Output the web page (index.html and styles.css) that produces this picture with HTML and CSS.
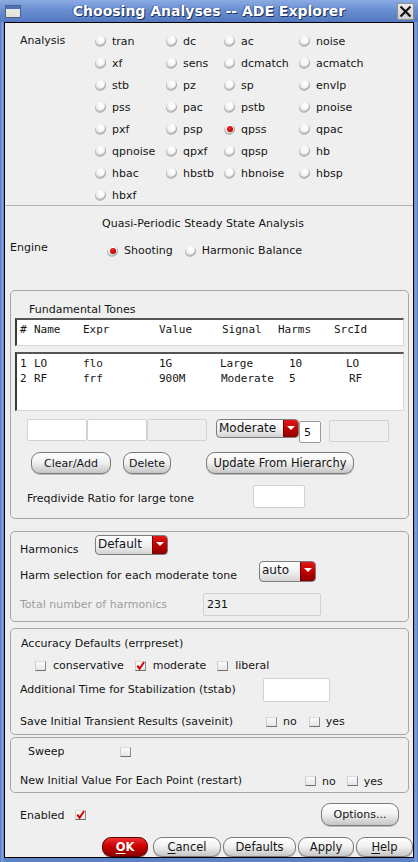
FILE: index.html
```html
<!DOCTYPE html>
<html>
<head>
<meta charset="utf-8">
<title>Choosing Analyses -- ADE Explorer</title>
<link rel="stylesheet" href="styles.css">
</head>
<body>
<div class="window">
  <div class="titlebar">
    <span class="win-icon"></span>
    <span class="title">Choosing Analyses -- ADE Explorer</span>
    <span class="close-btn"><svg width="13" height="13" viewBox="0 0 13 13"><path d="M1.5 1.5 L11.5 11.5 M11.5 1.5 L1.5 11.5" stroke="#111" stroke-width="2.2" fill="none"/></svg></span>
  </div>
  <div class="client">
    <section class="analysis">
      <div class="analysis-label">Analysis</div>
      <div class="radio-grid">
        <span class="radio"><span class="rb"></span>tran</span>
        <span class="radio"><span class="rb"></span>dc</span>
        <span class="radio"><span class="rb"></span>ac</span>
        <span class="radio"><span class="rb"></span>noise</span>
        <span class="radio"><span class="rb"></span>xf</span>
        <span class="radio"><span class="rb"></span>sens</span>
        <span class="radio"><span class="rb"></span>dcmatch</span>
        <span class="radio"><span class="rb"></span>acmatch</span>
        <span class="radio"><span class="rb"></span>stb</span>
        <span class="radio"><span class="rb"></span>pz</span>
        <span class="radio"><span class="rb"></span>sp</span>
        <span class="radio"><span class="rb"></span>envlp</span>
        <span class="radio"><span class="rb"></span>pss</span>
        <span class="radio"><span class="rb"></span>pac</span>
        <span class="radio"><span class="rb"></span>pstb</span>
        <span class="radio"><span class="rb"></span>pnoise</span>
        <span class="radio"><span class="rb"></span>pxf</span>
        <span class="radio"><span class="rb"></span>psp</span>
        <span class="radio"><span class="rb on"></span>qpss</span>
        <span class="radio"><span class="rb"></span>qpac</span>
        <span class="radio"><span class="rb"></span>qpnoise</span>
        <span class="radio"><span class="rb"></span>qpxf</span>
        <span class="radio"><span class="rb"></span>qpsp</span>
        <span class="radio"><span class="rb"></span>hb</span>
        <span class="radio"><span class="rb"></span>hbac</span>
        <span class="radio"><span class="rb"></span>hbstb</span>
        <span class="radio"><span class="rb"></span>hbnoise</span>
        <span class="radio"><span class="rb"></span>hbsp</span>
        <span class="radio"><span class="rb"></span>hbxf</span>
      </div>
    </section>

    <div class="qpss-title">Quasi-Periodic Steady State Analysis</div>

    <div class="engine">
      <span class="engine-label">Engine</span>
      <span class="engine-opts">
        <span class="radio shoot"><span class="rb on"></span>Shooting</span>
        <span class="radio"><span class="rb"></span>Harmonic Balance</span>
      </span>
    </div>

    <div class="group tones">
      <div class="group-title">Fundamental Tones</div>
      <div class="listbox header-box">
        <div class="trow">
          <span>#</span><span>Name</span><span>Expr</span><span>Value</span><span>Signal</span><span>Harms</span><span>SrcId</span>
        </div>
      </div>
      <div class="listbox data-box">
        <div class="trow data">
          <span>1</span><span>LO</span><span>flo</span><span>1G</span><span>Large</span><span>10</span><span>LO</span>
        </div>
        <div class="trow data">
          <span>2</span><span>RF</span><span>frf</span><span>900M</span><span class="mod">Moderate</span><span>5</span><span class="rf">RF</span>
        </div>
      </div>
      <div class="edit-row">
        <span class="field f60"></span>
        <span class="field f60"></span>
        <span class="field f60 disabled"></span>
        <span class="combo c-mod"><span class="combo-text">Moderate</span><span class="combo-btn"></span></span>
        <span class="field f5">5</span>
        <span class="field f60 disabled f-last"></span>
      </div>
      <div class="btn-row">
        <span class="btn b-clear">Clear/Add</span>
        <span class="btn b-delete">Delete</span>
        <span class="btn b-update">Update From Hierarchy</span>
      </div>
      <div class="freq-row">
        <span class="freq-label">Freqdivide Ratio for large tone</span>
        <span class="field f-freq"></span>
      </div>
    </div>

    <div class="group harm">
      <div class="harm-row r1">
        <span class="lbl l-harm">Harmonics</span>
        <span class="combo c-default"><span class="combo-text">Default</span><span class="combo-btn"></span></span>
      </div>
      <div class="harm-row r2">
        <span class="lbl l-sel">Harm selection for each moderate tone</span>
        <span class="combo c-auto"><span class="combo-text">auto</span><span class="combo-btn"></span></span>
      </div>
      <div class="harm-row r3">
        <span class="lbl l-total">Total number of harmonics</span>
        <span class="field f-total disabled">231</span>
      </div>
    </div>

    <div class="group accuracy">
      <div class="acc-title">Accuracy Defaults (errpreset)</div>
      <div class="check-row">
        <span class="check"><span class="cb"></span>conservative</span>
        <span class="check"><span class="cb on"><svg width="10" height="10" viewBox="0 0 10 10"><path d="M1.5 4.5 L4 8 L9 0.5" stroke="#d40000" stroke-width="2.2" fill="none"/></svg></span>moderate</span>
        <span class="check"><span class="cb"></span>liberal</span>
      </div>
      <div class="tstab-row">
        <span class="lbl l-tstab">Additional Time for Stabilization (tstab)</span>
        <span class="field f-tstab"></span>
      </div>
      <div class="save-row">
        <span class="lbl l-save">Save Initial Transient Results (saveinit)</span>
        <span class="check"><span class="cb"></span>no</span>
        <span class="check"><span class="cb"></span>yes</span>
      </div>
    </div>

    <div class="group sweep">
      <div class="sweep-row">
        <span class="lbl l-sweep">Sweep</span>
        <span class="cb"></span>
      </div>
      <div class="restart-row">
        <span class="lbl l-restart">New Initial Value For Each Point (restart)</span>
        <span class="check"><span class="cb"></span>no</span>
        <span class="check"><span class="cb"></span>yes</span>
      </div>
    </div>

    <div class="enabled-row">
      <span class="lbl l-enabled">Enabled</span>
      <span class="cb on"><svg width="10" height="10" viewBox="0 0 10 10"><path d="M1.5 4.5 L4 8 L9 0.5" stroke="#d40000" stroke-width="2.2" fill="none"/></svg></span>
      <span class="btn b-options">Options...</span>
    </div>

    <div class="dialog-buttons">
      <span class="btn b-ok"><u>O</u>K</span>
      <span class="btn b-cancel"><u>C</u>ancel</span>
      <span class="btn b-defaults">Defaults</span>
      <span class="btn b-apply">Apply</span>
      <span class="btn b-help"><u>H</u>elp</span>
    </div>
  </div>
</div>
</body>
</html>
```

FILE: styles.css
```css
* { box-sizing: border-box; }
html, body { margin: 0; padding: 0; }
body {
  width: 418px;
  height: 862px;
  overflow: hidden;
  font-family: "DejaVu Sans", "Liberation Sans", sans-serif;
  font-size: 11px;
  color: #151515;
  background: #5b80c6;
}

.window {
  width: 418px;
  height: 862px;
  display: flex;
  flex-direction: column;
  padding: 0 4px 4px;
  background: linear-gradient(90deg, #4c72ba 0, #86a6de 2px, #5d82c7 4px, #5d82c7 414px, #86a6de 416px, #4c72ba 418px);
}

/* title bar */
.titlebar {
  height: 22px;
  margin: 0 -4px;
  display: flex;
  align-items: center;
  background: linear-gradient(#8babe2, #6a8ed0 45%, #5479c2);
}
.win-icon {
  margin-left: 5px;
  width: 16px;
  height: 13px;
  border: 1px solid #50618a;
  background: linear-gradient(#4f70b8 0, #4f70b8 3px, #e9ece2 3px, #dfe2d6);
}
.title {
  flex: 1;
  text-align: center;
  color: #fff;
  font-weight: bold;
  font-size: 14px;
  text-shadow: 1px 1px 0 #23325a, -1px 0 1px #3a5591;
}
.close-btn {
  margin-right: 4px;
  width: 17px;
  height: 17px;
  background: linear-gradient(#ececec, #cfcfcf);
  border: 1px solid #8f8f8f;
  display: flex;
  align-items: center;
  justify-content: center;
}

/* client area */
.client {
  flex: 1;
  background: #efefef;
  border: 1px solid #000;
  display: flex;
  flex-direction: column;
  overflow: hidden;
}

/* analysis radio grid */
.analysis {
  display: flex;
  height: 183px;
  padding: 7px 0 0 15px;
  border-bottom: 1px solid #b3b3b3;
}
.analysis-label {
  width: 76px;
  line-height: 22px;
}
.radio-grid {
  display: grid;
  grid-template-columns: 71px 58px 75px auto;
  grid-auto-rows: 22px;
}
.radio {
  display: flex;
  align-items: center;
  gap: 6px;
  white-space: nowrap;
}
.rb {
  position: relative;
  flex: none;
  width: 10px;
  height: 10px;
  border-radius: 50%;
  background: radial-gradient(circle at 55% 35%, #ffffff 0, #f7f7f7 45%, #dadada 85%, #c4c4c4 100%);
  box-shadow: -1px 1px 0 #bcbcbc, inset -1px -1px 1px #a6a6a6;
}
.rb.on::after {
  content: "";
  position: absolute;
  left: 2px;
  top: 2px;
  width: 6px;
  height: 6px;
  border-radius: 50%;
  background: radial-gradient(circle at 40% 35%, #ff2a2a, #c80000 60%, #8a0000);
}

.qpss-title {
  margin-top: 10px;
  line-height: 16px;
  text-align: center;
  padding-right: 12px;
}

.engine {
  display: flex;
  margin-top: 8px;
  height: 19px;
  padding-left: 5px;
}
.engine-label {
  width: 98px;
  line-height: 16px;
  align-self: flex-start;
}
.engine-opts {
  display: flex;
  align-self: flex-end;
  line-height: 16px;
}
.engine-opts .shoot { margin-right: 13px; }

/* group boxes */
.group {
  margin-left: 5px;
  margin-right: 4px;
  border: 1px solid #a6a6a6;
  border-radius: 5px;
}
.tones {
  margin-top: 31px;
  padding-top: 11px;
  padding-bottom: 10px;
}
.group-title {
  line-height: 16px;
  padding-left: 18px;
}
.listbox {
  margin: 0 4px;
  background: #fff;
  border-style: solid;
  border-width: 2px 1px 1px 2px;
  border-color: #555 #d6d6d6 #d6d6d6 #3a3a3a;
  padding: 2px 3px;
  font-family: "DejaVu Sans Mono", "Liberation Mono", monospace;
  font-size: 11px;
}
.header-box { height: 28px; }
.data-box { height: 59px; margin-top: 6px; }
.trow {
  display: grid;
  grid-template-columns: 14px 49px 76px 63px 56px 56px auto;
  line-height: 15px;
  white-space: pre;
}
.trow.data {
  grid-template-columns: 14px 49px 76px 61px 69px 57px auto;
}
.trow .mod { margin-left: 1px; }
.trow .rf { margin-left: 3px; }

.edit-row {
  display: flex;
  align-items: flex-start;
  margin-top: 8px;
  padding-left: 16px;
  height: 24px;
}
.field {
  display: block;
  height: 22px;
  background: #fff;
  border: 1px solid #d2d2d2;
  border-radius: 2px;
}
.field.disabled { background: #efefef; }
.f60 { width: 60px; }
.f5 {
  width: 22px;
  margin-top: 2px;
  border-color: #9c9c9c;
  padding: 4px 0 0 4px;
  line-height: 14px;
}
.f-last { margin-left: 8px; margin-top: 1px; }

.combo {
  display: flex;
  height: 19px;
  border: 1px solid #7d7d7d;
  border-radius: 4px;
  background: linear-gradient(#ffffff, #f1f1f1 50%, #d4d4d4);
  overflow: hidden;
}
.combo-text {
  flex: 1;
  padding-left: 2px;
  line-height: 16px;
  font-size: 12px;
}
.combo-btn {
  position: relative;
  width: 15px;
  background: linear-gradient(#e21818, #bb0000 55%, #8c0000);
  border-left: 1px solid #7a0000;
}
.combo-btn::after {
  content: "";
  position: absolute;
  left: 3px;
  top: 6px;
  border-left: 4px solid transparent;
  border-right: 4px solid transparent;
  border-top: 4px solid #fff;
}
.c-mod { width: 83px; margin-left: 9px; }
.c-default { width: 73px; height: 20px; }
.c-auto { width: 57px; height: 21px; }

/* buttons */
.btn {
  display: flex;
  align-items: center;
  justify-content: center;
  height: 22px;
  border: 1px solid #7a7a7a;
  border-radius: 9px;
  background: linear-gradient(#ffffff, #f2f2f2 45%, #dadada 75%, #c6c6c6);
  box-shadow: 0 1px 0 #bdbdbd;
  white-space: nowrap;
}
.btn u { text-decoration: underline; text-underline-offset: 2px; }
.btn-row {
  display: flex;
  margin-top: 9px;
  padding-left: 20px;
}
.b-clear { width: 80px; }
.b-delete { width: 48px; margin-left: 12px; }
.b-update { width: 148px; margin-left: 35px; font-size: 11.5px; }

.freq-row {
  display: flex;
  align-items: flex-start;
  margin-top: 11px;
  padding-left: 16px;
}
.freq-label {
  width: 226px;
  padding-top: 6px;
  line-height: 16px;
}
.f-freq { width: 52px; height: 23px; }

/* harmonics */
.harm {
  margin-top: 12px;
  padding: 3px 0 5px 9px;
}
.harm-row {
  display: flex;
  align-items: flex-start;
}
.lbl { line-height: 16px; white-space: nowrap; }
.l-harm { width: 75px; margin-top: 7px; }
.harm-row.r2 { margin-top: 3px; }
.l-sel { width: 239px; margin-top: 7px; }
.harm-row.r3 { margin-top: 9px; }
.l-total { width: 183px; margin-top: 4px; color: #9e9e9e; }
.f-total {
  width: 118px;
  height: 23px;
  padding: 4px 0 0 3px;
  line-height: 14px;
  color: #111;
}

/* accuracy */
.accuracy {
  margin-top: 6px;
  padding: 7px 0 4px 9px;
}
.acc-title { line-height: 16px; padding-left: 1px; }
.check-row {
  display: flex;
  margin-top: 6px;
  padding-left: 15px;
  line-height: 16px;
}
.check {
  display: flex;
  align-items: center;
  gap: 7px;
  white-space: nowrap;
}
.check-row .check + .check { margin-left: 11px; }
.cb {
  display: flex;
  align-items: center;
  justify-content: center;
  flex: none;
  width: 11px;
  height: 10px;
  background: linear-gradient(#fbfbfb, #e6e6e6);
  border: 1px solid;
  border-color: #dcdcdc #8c8c8c #6e6e6e #d0d0d0;
}
.tstab-row {
  display: flex;
  align-items: center;
  margin-top: 4px;
}
.l-tstab { width: 243px; }
.f-tstab { width: 67px; height: 24px; }
.save-row {
  display: flex;
  align-items: center;
  margin-top: 12px;
  line-height: 16px;
}
.l-save { width: 246px; }
.save-row .check, .restart-row .check { gap: 6px; }
.save-row .check + .check { margin-left: 12px; }

/* sweep */
.sweep {
  margin-top: 2px;
  padding: 6px 0 3px 9px;
}
.sweep-row {
  display: flex;
  align-items: center;
}
.l-sweep { width: 100px; padding-left: 8px; }
.restart-row {
  display: flex;
  align-items: center;
  margin-top: 13px;
}
.l-restart { width: 285px; }
.restart-row .check + .check { margin-left: 11px; }

/* bottom rows */
.enabled-row {
  display: flex;
  align-items: center;
  margin-top: 10px;
  padding-left: 15px;
}
.l-enabled { width: 55px; padding-top: 2px; }
.b-options {
  margin-left: auto;
  margin-right: 14px;
  width: 78px;
  height: 23px;
}

.dialog-buttons {
  display: flex;
  justify-content: flex-end;
  margin-top: 11px;
}
.dialog-buttons .btn { height: 20px; font-size: 11.5px; }
.b-ok {
  width: 46px;
  margin-right: 5px;
  color: #fff;
  font-weight: bold;
  border-color: #5e0000;
  background: linear-gradient(#ee3030, #cc0000 45%, #a80000 75%, #8a0000);
}
.b-cancel { width: 68px; margin-right: 2px; }
.b-defaults { width: 73px; margin-right: 2px; }
.b-apply { width: 56px; margin-right: 2px; }
.b-help { width: 57px; }
```
